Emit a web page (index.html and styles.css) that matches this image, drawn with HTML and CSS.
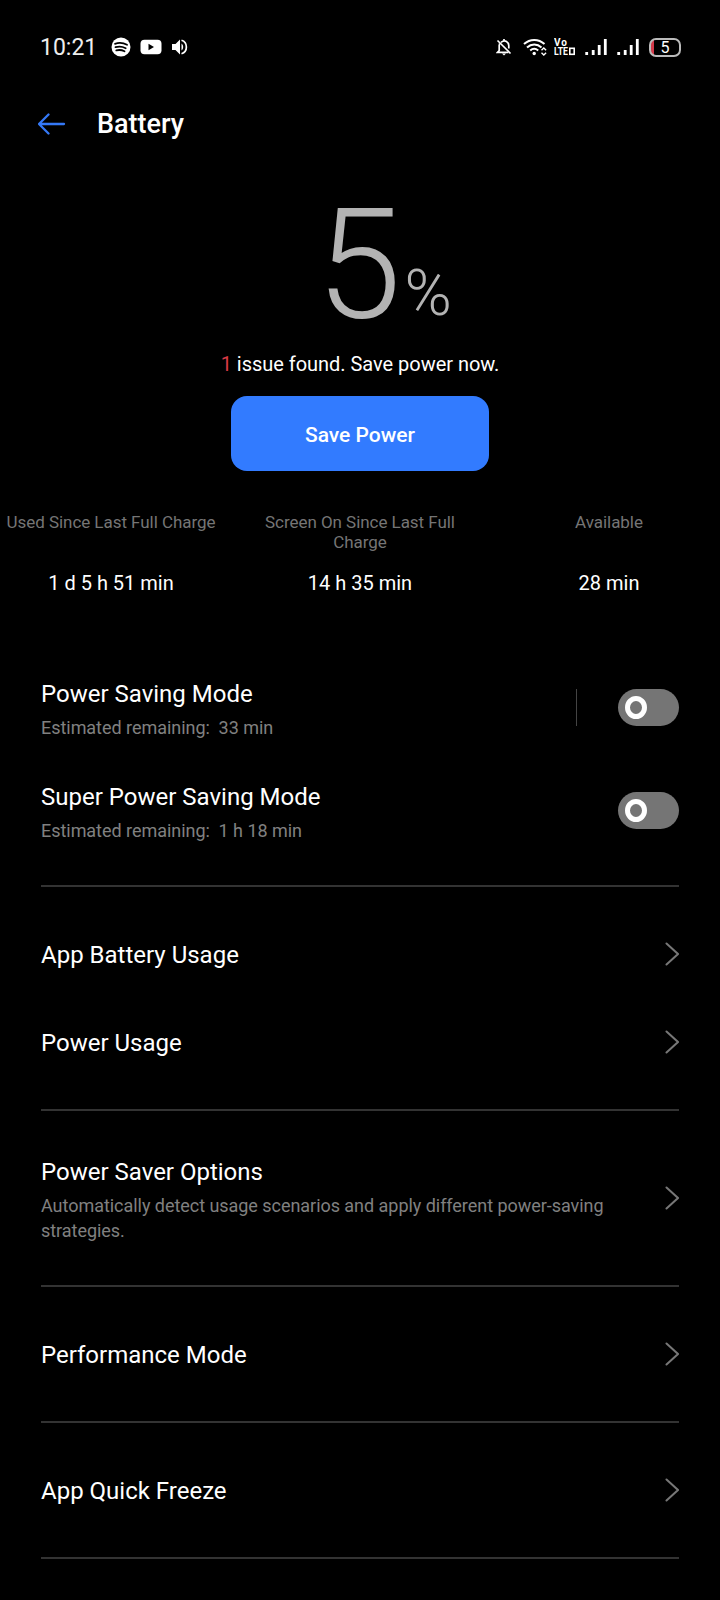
FILE: index.html
```html
<!DOCTYPE html>
<html lang="en">
<head>
    <meta charset="UTF-8">
    <meta name="viewport" content="width=device-width, initial-scale=1.0">
    <title>Battery</title>
    <link rel="stylesheet" href="styles.css">
</head>
<body>

<div class="status-bar">
    <span class="time">10:21</span>
    <div class="notifications">
        <svg width="20" height="20" viewBox="0 0 20 20">
            <circle cx="10" cy="10" r="9.5" fill="#fff"/>
            <path d="M4 6.800c4-1.300 8.500-.9 12 1M4.500 10.200c3.500-1 7.200-.6 10.200 1M5.300 13.400c3-.8 5.700-.4 8.200.9" fill="none" stroke="#000" stroke-width="1.800" stroke-linecap="round"/>
        </svg>
        <svg width="22" height="16" viewBox="0 0 22 16">
            <rect x="0.500" y="0.700" width="21" height="14.600" rx="4" fill="#fff"/>
            <path d="M8.500 4.800v6.400l5.500-3.200z" fill="#000"/>
        </svg>
        <svg width="18" height="18" viewBox="0 0 18 18">
            <path d="M1 6h3.500l4.500-4.500v15L4.500 12H1z" fill="#fff"/>
            <path d="M10.500 5.500c2.200 1.500 2.200 5.500 0 7z" fill="#fff"/>
            <path d="M10.500 2.200c6.500 2 6.500 11.600 0 13.600" fill="none" stroke="#fff" stroke-width="1.700"/>
        </svg>
    </div>
    <div class="system-icons">
        <svg class="bell" width="16" height="18" viewBox="0 0 16 18">
            <path d="M5 4.300C9 1 13 4 12.800 8v2.500M3.200 6.500v6L1.500 14.300H12.500M3.200 6.500L3.800 5.500M8 1v2" fill="none" stroke="#fff" stroke-width="1.700"/>
            <path d="M1.500 2.500L14.500 15.500" stroke="#fff" stroke-width="1.600"/>
            <path d="M6 15.500h4l-2 2z" fill="#fff"/>
        </svg>
        <svg class="wifi" width="24" height="18" viewBox="0 0 24 18">
            <path d="M1 6c6-5.500 14.500-5.500 20.500 0M4 9.500c4.300-4 10.200-4 14.500 0M7.200 12.500c2.500-2.200 5.500-2.200 8 0" fill="none" stroke="#fff" stroke-width="2"/>
            <circle cx="11.200" cy="15.500" r="1.700" fill="#fff"/>
            <path d="M18.500 12.300l2.300-2.300 2.300 2.300M18.500 14.700l2.300 2.300 2.300-2.300" fill="none" stroke="#fff" stroke-width="1.400"/>
        </svg>
        <svg class="volte" width="22" height="24" viewBox="0 0 22 24">
            <text x="0" y="11" textLength="13">Vo</text>
            <text x="0" y="20" textLength="14" lengthAdjust="spacingAndGlyphs">LTE</text>
            <rect x="15.800" y="13.300" width="4.400" height="6" fill="none" stroke="#fff" stroke-width="1.600"/>
        </svg>
        <svg class="signal" width="22" height="18" viewBox="0 0 22 18">
            <path d="M1.700 14v3M8.200 12v5M14.200 7v10M20.300 1v16" stroke="#fff" stroke-width="2.800"/>
        </svg>
        <svg class="signal" width="22" height="18" viewBox="0 0 22 18">
            <path d="M1.700 14v3M8.200 12v5M14.200 7v10M20.300 1v16" stroke="#fff" stroke-width="2.800"/>
        </svg>
        <div class="battery-icon">5</div>
    </div>
</div>

<header>
    <svg width="28" height="22" viewBox="0 0 28 22">
        <path d="M26 11H1.500M10.500 1.500L1 11l9.500 9.500" fill="none" stroke="#3478f6" stroke-width="2.300" stroke-linecap="round" stroke-linejoin="round"/>
    </svg>
    <h1>Battery</h1>
</header>

<div class="level">
    <span class="number">5</span><span class="percent">%</span>
</div>
<p class="issue"><span>1</span> issue found. Save power now.</p>
<button class="save-button">Save Power</button>

<div class="stats">
    <div class="stat">
        <div class="label">Used Since Last Full Charge</div>
        <div class="value">1 d 5 h 51 min</div>
    </div>
    <div class="stat">
        <div class="label">Screen On Since Last Full Charge</div>
        <div class="value">14 h 35 min</div>
    </div>
    <div class="stat">
        <div class="label">Available</div>
        <div class="value">28 min</div>
    </div>
</div>

<div class="list">
    <section class="modes">
        <div class="mode">
            <div class="text">
                <h2>Power Saving Mode</h2>
                <p>Estimated remaining:&nbsp; 33 min</p>
            </div>
            <div class="separator"></div>
            <div class="toggle"></div>
        </div>
        <div class="mode">
            <div class="text">
                <h2>Super Power Saving Mode</h2>
                <p>Estimated remaining:&nbsp; 1 h 18 min</p>
            </div>
            <div class="toggle"></div>
        </div>
    </section>

    <section class="usage">
        <div class="row">
            <h2>App Battery Usage</h2>
            <svg class="chevron" viewBox="0 0 14 24"><path d="M1.500 1.500L13 12 1.500 22.500"/></svg>
        </div>
        <div class="row">
            <h2>Power Usage</h2>
            <svg class="chevron" viewBox="0 0 14 24"><path d="M1.500 1.500L13 12 1.500 22.500"/></svg>
        </div>
    </section>

    <section class="saver">
        <div class="row">
            <div class="text">
                <h2>Power Saver Options</h2>
                <p>Automatically detect usage scenarios and apply different power-saving strategies.</p>
            </div>
            <svg class="chevron" viewBox="0 0 14 24"><path d="M1.500 1.500L13 12 1.500 22.500"/></svg>
        </div>
    </section>

    <section class="single">
        <div class="row">
            <h2>Performance Mode</h2>
            <svg class="chevron" viewBox="0 0 14 24"><path d="M1.500 1.500L13 12 1.500 22.500"/></svg>
        </div>
    </section>

    <section class="single">
        <div class="row">
            <h2>App Quick Freeze</h2>
            <svg class="chevron" viewBox="0 0 14 24"><path d="M1.500 1.500L13 12 1.500 22.500"/></svg>
        </div>
    </section>
</div>

</body>
</html>
```
FILE: styles.css
```css
*, *::before {
    box-sizing: border-box;
}
body {
    font-family: Roboto, sans-serif;
    margin: 0;
    height: 1600px;
    overflow: hidden;
    background-color: #000;
    color: #fff;
}
h1, h2, p {
    margin: 0;
    font-weight: 400;
}
svg {
    display: block;
    flex-shrink: 0;
}
.status-bar {
    display: flex;
    align-items: center;
    height: 94px;
    padding: 0 39px 0 40px;
}
.time {
    width: 71px;
    font-size: 23px;
    color: #eee;
}
.notifications {
    display: flex;
    align-items: center;
    gap: 9px;
}
.system-icons {
    display: flex;
    align-items: center;
    margin-left: auto;
}
.wifi {
    margin-left: 11px;
}
.volte {
    margin: 0 9px 0 7px;
    fill: #fff;
    font-size: 10px;
    font-weight: 700;
}
.signal {
    margin-right: 10px;
}
.battery-icon {
    width: 32px;
    height: 19px;
    border: 2px solid #bbb;
    border-radius: 7px;
    background: linear-gradient(to right, #d33a4a 3px, #000 3px);
    font-size: 16px;
    line-height: 16px;
    text-align: center;
}
header {
    display: flex;
    align-items: center;
    height: 60px;
    padding-left: 38px;
}
h1 {
    margin-left: 31px;
    font-size: 27px;
    font-weight: 500;
}
.level {
    display: flex;
    align-items: flex-start;
    height: 192px;
    padding-left: 316px;
    font-weight: 300;
    color: #b3b3b3;
}
.number {
    font-size: 154px;
    line-height: 223px;
}
.percent {
    margin: 100px 0 0 3px;
    font-size: 64px;
    line-height: 80px;
}
.issue {
    height: 50px;
    font-size: 20px;
    line-height: 36px;
    letter-spacing: -0.03px;
    text-align: center;
}
.issue span {
    color: #d93a45;
}
.save-button {
    display: block;
    width: 258px;
    height: 75px;
    margin: 0 auto;
    padding: 2px 0 0;
    border: none;
    border-radius: 16px;
    background-color: #327bff;
    color: #fff;
    font-family: inherit;
    font-size: 21px;
    font-weight: 500;
}
.stats {
    display: grid;
    grid-template-columns: 222px 276px 222px;
    height: 198px;
    padding-top: 41px;
    text-align: center;
}
.label {
    height: 56px;
    padding: 0 40px;
    font-size: 17px;
    line-height: 20px;
    letter-spacing: -0.05px;
    color: #757575;
}
.stat:first-child .label {
    padding: 0;
}
.value {
    font-size: 20px;
    line-height: 30px;
}
.list {
    padding: 0 41px;
}
section {
    border-bottom: 2px solid #333;
}
h2 {
    padding-top: 1px;
    font-size: 24px;
    line-height: 32px;
}
.text p {
    margin-top: 5px;
    font-size: 18px;
    line-height: 25px;
    letter-spacing: -0.04px;
    color: #808080;
}
.modes {
    height: 218px;
}
.mode {
    display: flex;
    height: 103px;
}
.text {
    flex: 1;
    padding-top: 8px;
}
.separator {
    width: 1px;
    height: 37px;
    margin: 20px 41px 0 0;
    background-color: #444;
}
.toggle {
    width: 61px;
    height: 37px;
    margin-top: 20px;
    padding: 7px;
    border-radius: 19px;
    background-color: #757575;
}
.toggle::before {
    content: "";
    display: block;
    width: 22px;
    height: 23px;
    border: 5px solid #fff;
    border-radius: 50%;
}
.row {
    display: flex;
    align-items: center;
    justify-content: space-between;
}
.chevron {
    width: 14px;
    height: 24px;
    fill: none;
    stroke: #777;
    stroke-width: 2;
    stroke-linecap: round;
}
.usage {
    height: 224px;
    padding-top: 23px;
}
.usage .row {
    height: 88px;
}
.saver {
    height: 176px;
}
.saver .row {
    height: 174px;
}
.saver .text {
    flex: none;
    width: 580px;
    padding: 1px 0 0;
}
.single .row {
    height: 134px;
}
```
